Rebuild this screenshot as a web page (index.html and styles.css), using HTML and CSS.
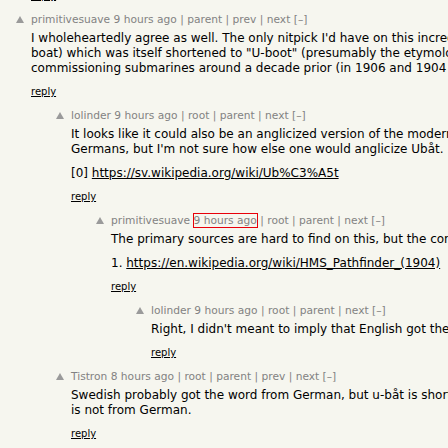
FILE: index.html
```html
<!DOCTYPE html>
<html>
<head>
<meta charset="utf-8">
<link rel="stylesheet" href="styles.css">
</head>
<body>
<div class="thread">
  <div class="comment lvl0 prev-tail">
    <div class="vote"></div>
    <div class="body"><div class="reply"><a href="#">reply</a></div></div>
  </div>

  <div class="comment lvl0">
    <div class="vote"><svg class="arrow" viewBox="0 0 10 10"><polygon points="5,2 9,9 1,9"/></svg></div>
    <div class="body">
      <div class="head"><a href="#">primitivesuave</a> <a href="#">9 hours ago</a> | <a href="#">parent</a> | <a href="#">prev</a> | <a href="#">next</a> [–]</div>
      <div class="text">
        <p>I wholeheartedly agree as well. The only nitpick I'd have on this incredible write-up is that "U-boat" (from Untersee-<br>boat) which was itself shortened to "U-boot" (presumably the etymology came from the German navy<br>commissioning submarines around a decade prior (in 1906 and 1904 respectively).</p>
      </div>
      <div class="reply"><a href="#">reply</a></div>
    </div>
  </div>

  <div class="comment lvl1">
    <div class="vote"><svg class="arrow" viewBox="0 0 10 10"><polygon points="5,2 9,9 1,9"/></svg></div>
    <div class="body">
      <div class="head"><a href="#">lolinder</a> <a href="#">9 hours ago</a> | <a href="#">root</a> | <a href="#">parent</a> | <a href="#">next</a> [–]</div>
      <div class="text">
        <p>It looks like it could also be an anglicized version of the modern Swedish word for submarine, which was borrowed from the<br>Germans, but I'm not sure how else one would anglicize Ubåt.</p>
        <p>[0] <a href="#">https://sv.wikipedia.org/wiki/Ub%C3%A5t</a></p>
      </div>
      <div class="reply"><a href="#">reply</a></div>
    </div>
  </div>

  <div class="comment lvl2">
    <div class="vote"><svg class="arrow" viewBox="0 0 10 10"><polygon points="5,2 9,9 1,9"/></svg></div>
    <div class="body">
      <div class="head"><a href="#">primitivesuave</a> <a href="#" class="focused">9 hours ago</a> | <a href="#">root</a> | <a href="#">parent</a> | <a href="#">next</a> [–]</div>
      <div class="text">
        <p>The primary sources are hard to find on this, but the conventional name seems to have come from the Royal Navy.</p>
        <p>1. <a href="#">https://en.wikipedia.org/wiki/HMS_Pathfinder_(1904)</a></p>
      </div>
      <div class="reply"><a href="#">reply</a></div>
    </div>
  </div>

  <div class="comment lvl3">
    <div class="vote"><svg class="arrow" viewBox="0 0 10 10"><polygon points="5,2 9,9 1,9"/></svg></div>
    <div class="body">
      <div class="head"><a href="#">lolinder</a> <a href="#">9 hours ago</a> | <a href="#">root</a> | <a href="#">parent</a> | <a href="#">next</a> [–]</div>
      <div class="text">
        <p>Right, I didn't meant to imply that English got the word from Swedish.</p>
      </div>
      <div class="reply"><a href="#">reply</a></div>
    </div>
  </div>

  <div class="comment lvl1">
    <div class="vote"><svg class="arrow" viewBox="0 0 10 10"><polygon points="5,2 9,9 1,9"/></svg></div>
    <div class="body">
      <div class="head"><a href="#">Tistron</a> <a href="#">8 hours ago</a> | <a href="#">root</a> | <a href="#">parent</a> | <a href="#">prev</a> | <a href="#">next</a> [–]</div>
      <div class="text">
        <p>Swedish probably got the word from German, but u-båt is short for undervattensbåt, so the word itself<br>is not from German.</p>
      </div>
      <div class="reply"><a href="#">reply</a></div>
    </div>
  </div>
</div>
</body>
</html>
```

FILE: styles.css
```css
html, body {
  margin: 0;
  padding: 0;
  background: #f6f6ef;
  overflow: hidden;
}

body {
  font-family: "DejaVu Sans", Verdana, sans-serif;
  color: #000;
}

.thread {
  width: 1100px;
  margin-top: -10px;
  padding-left: 14px;
}

.comment {
  display: flex;
  margin-bottom: 11px;
}

.lvl1 { padding-left: 40px; }
.lvl2 { padding-left: 80px; }
.lvl3 { padding-left: 120px; }

.vote {
  width: 17px;
  flex: none;
}

.arrow {
  display: block;
  width: 10px;
  height: 10px;
  margin: 1px 0 0 1px;
}

.arrow polygon {
  fill: #9a9a9a;
}

.body {
  flex: 1;
  min-width: 0;
}

.head {
  font-size: 10.667px;
  line-height: 13px;
  color: #828282;
  white-space: nowrap;
}

.head a {
  color: #828282;
  text-decoration: none;
}

.head a.focused {
  outline: 1px solid #e8000a;
  outline-offset: 0;
}

.text {
  margin-top: 5px;
  font-size: 12px;
  line-height: 15px;
  white-space: nowrap;
}

.text p {
  margin: 9px 0 0;
}

.text p:first-child {
  margin-top: 0;
}

.text a {
  color: #000;
  text-decoration: underline;
}

.reply {
  margin-top: 10px;
  font-size: 10px;
  line-height: 12px;
}

.reply a {
  color: #000;
  text-decoration: underline;
}

.prev-tail .reply {
  margin-top: 0;
}
```
